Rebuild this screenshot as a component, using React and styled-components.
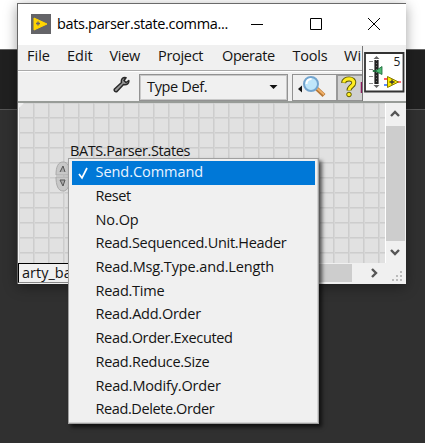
import React from "react";
import styled, { createGlobalStyle } from "styled-components";

const GlobalStyle = createGlobalStyle`
  * { box-sizing: border-box; }
  body { margin: 0; overflow: hidden; }
  svg { flex: none; display: block; }
`;

const Desktop = styled.main`
  position: relative;
  width: 425px;
  height: 443px;
  padding: 3px 18px 0 17px;
  overflow: hidden;
  font: 14.5px/20px "Open Sans", "Noto Sans", sans-serif;
  color: #141414;
  background: linear-gradient(#fff 0 49px, #666 49px 50px, #202020 50px 109px, #555 109px 110px, #303030 110px);
`;

const Window = styled.section`
  position: relative;
  width: 389px;
  height: 281px;
  display: flex;
  flex-direction: column;
  border-top: 1px solid #6a6a6a;
  border-left: 1px solid #666;
  background: #f0f0f0;
  box-shadow: 0 3px 12px rgba(0, 0, 0, 0.38);
`;

const Text = styled.span`
  display: block;
  white-space: nowrap;
  flex: none;
  letter-spacing: ${(p) => p.$track || 0}px;
`;

const TitleBar = styled.header`
  height: 41px;
  flex: none;
  display: flex;
  align-items: center;
  padding: 0 0 1px 13px;
  background: #fff;
  color: #000;
`;

const TitleText = styled(Text)`
  width: 177px;
  padding-left: 6px;
`;

const WindowButton = styled.button`
  width: 58.5px;
  height: 40px;
  padding: 0;
  border: 0;
  background: none;
  display: grid;
  place-items: center;
  flex: none;
`;

const MenuBar = styled.nav`
  height: 26px;
  flex: none;
  display: flex;
  padding: 1px 0 0 9px;
  border-bottom: 1px solid #aaa;
`;

const MenuItem = styled(Text)`
  width: ${(p) => p.$w}px;
`;

const Toolbar = styled.div`
  height: 32px;
  flex: none;
  display: flex;
  padding: 2px 0 0 95px;
  border-top: 1px solid #fff;
  border-bottom: 2px solid #989c98;
`;

const Select = styled.div`
  width: 149px;
  height: 27px;
  margin-left: 8px;
  display: flex;
  align-items: center;
  justify-content: space-between;
  padding: 0 9px 2px 7px;
  border: 1px solid #929292;
  box-shadow: inset 0 0 0 1px #c9c9c9;
`;

const ToolGroup = styled.div`
  width: 71px;
  height: 27px;
  margin-left: 4px;
  display: flex;
  border: 1px solid #929292;
  border-right: 0;
`;

const HelpButton = styled.div`
  width: 27px;
  margin-left: auto;
  background: #d0d0d0;
  border-left: 2px solid #999;
  border-top: 1px solid #999;
`;

const ConnectorPane = styled.div`
  position: absolute;
  left: 344px;
  top: 42px;
  width: 44px;
  height: 55px;
  padding: 6px 0 0 1px;
  border-left: 1px solid #777;
  background: #f0f0f0;
`;

const Body = styled.div`
  height: 160px;
  flex: none;
  display: flex;
`;

const Canvas = styled.div`
  position: relative;
  width: 368px;
  flex: none;
  background-color: #e1e1e1;
  background-image: linear-gradient(90deg, #cdcdcd 1px, #d6d6d6 1px 2px, transparent 2px),
    linear-gradient(#cdcdcd 1px, #d6d6d6 1px 2px, transparent 2px);
  background-size: 15px 15px;
  background-position: 14px 14px;
  border-right: 1px solid #fff;
  border-left: 1px solid #f4f4f4;
  clip-path: polygon(6px 0, 100% 0, 100% 100%, 0 100%, 0 6px);
`;

const ControlLabel = styled(Text)`
  position: absolute;
  left: 51px;
  top: 38px;
`;

const Spinner = styled.svg`
  position: absolute;
  left: 36px;
  top: 56px;
`;

const ScrollColumn = styled.div`
  width: 20px;
  display: flex;
  flex-direction: column;
  background: #f0f0f0;
`;

const ScrollButton = styled.div`
  width: 18px;
  height: 22px;
  display: grid;
  place-items: center;
`;

const VerticalThumb = styled.div`
  height: 115px;
  width: 19px;
  margin: 1px 0 0;
  background: #cdcdcd;
`;

const BottomBar = styled.div`
  height: 20px;
  flex: none;
  display: flex;
  align-items: stretch;
`;

const ContextTab = styled.div`
  width: 220px;
  padding-left: 3px;
  border: 1px solid #000;
  border-bottom-color: #888;
  line-height: 17px;
`;

const HorizontalThumb = styled.div`
  width: 114px;
  margin: 1px 0;
  background: #cdcdcd;
`;

const Popup = styled.ul`
  position: absolute;
  left: 68px;
  top: 158px;
  width: 251px;
  height: 266px;
  margin: 0;
  padding: 2px 2px 0 3px;
  list-style: none;
  background: #f0f0f0;
  border: 1px solid #a0a0a0;
  box-shadow: inset -1px -1px #d4d4d4, 3px 3px 4px rgba(0, 0, 0, 0.65);
`;

const PopupItem = styled.li`
  height: 23.7px;
  display: flex;
  align-items: center;
  padding-bottom: 1px;
  width: 243px;
  color: ${(p) => (p.$selected ? "#e9f4ff" : "#141414")};
  background: ${(p) => (p.$selected ? "#0078d7" : "transparent")};
`;

const CheckSlot = styled.span`
  width: 23.5px;
  height: 22px;
  flex: none;
`;

const menus = [
  ["File", 40, 0],
  ["Edit", 42.5, 0],
  ["View", 48.5, -0.3],
  ["Project", 64, -0.3],
  ["Operate", 70.5, -0.4],
  ["Tools", 51.5, -0.2],
  ["Wi", 18, 0],
];

const states = [
  ["Send.Command", -0.05],
  ["Reset", -0.4],
  ["No.Op", -0.1],
  ["Read.Sequenced.Unit.Header", -0.29],
  ["Read.Msg.Type.and.Length", -0.13],
  ["Read.Time", -0.25],
  ["Read.Add.Order", -0.24],
  ["Read.Order.Executed", -0.34],
  ["Read.Reduce.Size", -0.27],
  ["Read.Modify.Order", -0.18],
  ["Read.Delete.Order", -0.4],
];

const AppIcon = () => (
  <svg width="20" height="20">
    <path d="M0 0h20v20H0z" fill="#646468" />
    <path d="M3 4 16 10 3 16Z" fill="#ffd500" stroke="#ffd500" strokeLinejoin="round" />
    <path d="M5 9.5h4M7 7.5v4" stroke="#67636a" strokeWidth="1.3" />
  </svg>
);

const Wrench = () => (
  <svg width="18" height="22" viewBox="0 0 18 22">
    <path d="M15.8 6.5 13 8.5l-2-2 2-2.8C9.8 3 7.8 5 8.5 8.5L1.5 15c-1 1.6.8 3.4 2.5 2.5l6.5-7c3.5.6 5.7-1 5.3-4Z" fill="#999" stroke="#292929" strokeWidth="1.5" strokeLinejoin="round" />
  </svg>
);

const Search = () => (
  <svg width="34" height="25" viewBox="0 0 34 25">
    <path d="m5 14 4-3.5v7Z" fill="#111" />
    <path d="m23 13 8 7.5" stroke="#b77734" strokeWidth="4.2" />
    <path d="m23 12.5 8 7" stroke="#f2b26b" strokeWidth="1.8" />
    <circle cx="18" cy="9" r="7" fill="#bfe6fa" stroke="#73a5cf" strokeWidth="2" />
    <path d="M13.5 9c0-3 2-5 5-5" fill="none" stroke="#fff" strokeWidth="2" />
  </svg>
);

const Help = () => (
  <svg width="25" height="24">
    <path d="M5.5 7C6 1.5 16.5 1.5 15.7 7c0 3.5-4.7 3-4.7 7.5" fill="none" stroke="#5c5800" strokeWidth="5" />
    <path d="M5.7 6.7C6 1.5 16.5 1.5 15.7 7c0 3.5-4.7 3-4.7 7.2" fill="none" stroke="#ffed20" strokeWidth="3.2" />
    <circle cx="11" cy="18.5" r="2.3" fill="#ffed20" stroke="#5c5800" />
    <path d="M23.5 6v11" stroke="#8a1a5c" strokeWidth="1.5" />
  </svg>
);

const Connector = () => (
  <svg width="41" height="41">
    <path d="M1 1h38.5v38.5H1Z" fill="#fff" stroke="#333" strokeWidth="1.8" />
    <path d="M12.5 8v24" stroke="#222" strokeWidth="4.2" />
    <path d="M12.5 8v24" stroke="#777" strokeDasharray="1 2" />
    <path d="M5 9.5h4M5 17.5h4M5 24.5h4M5 31.5h4" stroke="#888" />
    <path d="m9.5 7 3-3 3 3ZM9.5 33l3 3 3-3Z" fill="#666" />
    <path d="M9 18.5h3l6-4v8l-6-3H9Z" fill="#4dba72" stroke="#176335" strokeWidth=".8" />
    <path d="M20 33h4" stroke="#2467ff" strokeWidth="1.5" />
    <path d="M20 27h3" stroke="#f23" strokeWidth="1.5" />
    <path d="M33 30h4" stroke="#f45" strokeWidth="1.5" />
    <path d="m23.5 24.5 11 5.5-11 5.5Z" fill="#ffec00" stroke="#8b7c00" />
    <path d="M25.5 30h5M28 27.5v5" stroke="#333" strokeWidth="1.3" />
    <text x="29.5" y="14" fontSize="12" fontFamily="Open Sans, sans-serif" fill="#222">5</text>
  </svg>
);

const paths = { up: "M2 8 6 4l4 4", down: "M2 4l4 4 4-4" };
const Chevron = ({ direction }) => (
  <svg width="12" height="12">
    <path d={paths[direction]} fill="none" stroke="#555" strokeWidth="2.4" />
  </svg>
);

export default function App() {
  return (
    <Desktop>
      <GlobalStyle />
      <Window>
        <TitleBar>
          <AppIcon />
          <TitleText $track={-0.34}>bats.parser.state.comma...</TitleText>
          <WindowButton aria-label="Minimize">
            <svg width="12" height="12"><path d="M0 6.5h12" stroke="#000" /></svg>
          </WindowButton>
          <WindowButton aria-label="Maximize">
            <svg width="12" height="12"><path d="M.5.5h11v11H.5Z" fill="none" stroke="#000" /></svg>
          </WindowButton>
          <WindowButton aria-label="Close">
            <svg width="12" height="12"><path d="m0 0 12 12M12 0 0 12" stroke="#000" /></svg>
          </WindowButton>
        </TitleBar>
        <MenuBar>
          {menus.map(([name, width, track]) => (
            <MenuItem key={name} $w={width} $track={track}>{name}</MenuItem>
          ))}
        </MenuBar>
        <Toolbar>
          <Wrench />
          <Select>
            <Text $track={-0.35}>Type Def.</Text>
            <svg width="9" height="6"><path d="M.5 1h8l-4 4Z" fill="#111" /></svg>
          </Select>
          <ToolGroup>
            <Search />
            <HelpButton><Help /></HelpButton>
          </ToolGroup>
        </Toolbar>
        <Body>
          <Canvas>
            <ControlLabel $track={-0.4}>BATS.Parser.States</ControlLabel>
            <Spinner width="16" height="34">
              <path d="M1 16C1 8 3 3 8 3s7 5 7 13ZM1 18h14c0 8-2 14-7 14S1 26 1 18Z" fill="#c8c8c8" stroke="#aaa" />
              <path d="m5 13 3-6 2 6M5 21h5l-2 6Z" fill="#aaa" stroke="#555" />
            </Spinner>
          </Canvas>
          <ScrollColumn>
            <ScrollButton><Chevron direction="up" /></ScrollButton>
            <VerticalThumb />
            <ScrollButton><Chevron direction="down" /></ScrollButton>
          </ScrollColumn>
        </Body>
        <BottomBar>
          <ContextTab><Text>arty_ba</Text></ContextTab>
          <HorizontalThumb />
          <svg width="54" height="20">
            <path d="m20 6 4 4-4 4" fill="none" stroke="#555" strokeWidth="2.4" />
            <path d="M48 8h2v2h-2zM44 12h2v2h-2zM48 12h2v2h-2zM40 16h2v2h-2zM44 16h2v2h-2zM48 16h2v2h-2z" fill="#bbb" />
          </svg>
        </BottomBar>
        <ConnectorPane><Connector /></ConnectorPane>
      </Window>
      <Popup>
        {states.map(([name, track], index) => (
          <PopupItem key={name} $selected={index === 0}>
            <CheckSlot>
              {index === 0 && <svg width="22" height="22"><path d="m7 13 3 4 5-10" fill="none" stroke="#fff" strokeWidth="1.7" /></svg>}
            </CheckSlot>
            <Text $track={track}>{name}</Text>
          </PopupItem>
        ))}
      </Popup>
    </Desktop>
  );
}
